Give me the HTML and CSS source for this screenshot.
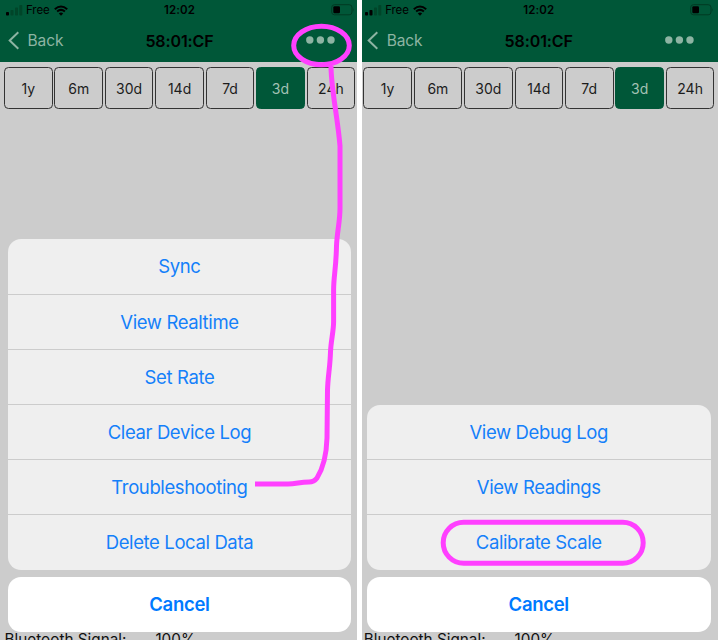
FILE: index.html
```html
<!DOCTYPE html>
<html lang="en">
<head>
<meta charset="utf-8">
<title>Device actions</title>
<link rel="stylesheet" href="styles.css">
</head>
<body>
<svg width="0" height="0" class="defs">
  <symbol id="signal" viewBox="0 0 17 11"><rect x="0" y="7" width="3" height="3.5" rx=".8"/><rect x="4.5" y="5" width="3" height="5.5" rx=".8" class="mid"/><rect x="9" y="2.5" width="3" height="8" rx=".8" class="dim"/><rect x="13.3" y="0" width="3" height="10.5" rx=".8" class="dim"/></symbol>
  <symbol id="wifi" viewBox="0 0 14 11"><path d="M.8 4.2Q7-1.3 13.200 4.2M3.1 6.6Q7 3.2 10.900 6.6" fill="none" stroke="#000" stroke-width="2"/><path d="M4.8 8.5Q7 6.7 9.2 8.5L7 10.8Z"/></symbol>
  <symbol id="battery" viewBox="0 0 24 12"><rect x=".7" y=".7" width="20.3" height="10.1" rx="2.8" fill="none" stroke="#003a23" stroke-width="1"/><rect x="2.3" y="2.3" width="6.7" height="7" rx="1.2"/><path d="M22 4Q23.4 5.7 22 7.6Z" fill="#003a23"/></symbol>
  <symbol id="back" viewBox="0 0 12 19"><path d="M10.3 1.2L1.7 9.5L10.3 17.8" fill="none" stroke="#8db4a3" stroke-width="2"/></symbol>
  <symbol id="more" viewBox="0 0 29 8"><circle cx="3.8" cy="4" r="3.7"/><circle cx="14.4" cy="4" r="3.7"/><circle cx="25" cy="4" r="3.7"/></symbol>
</svg>
<main class="screens">
  <section class="phone first">
    <header class="top">
      <div class="status"><span class="carrier"><svg class="signal one"><use href="#signal"/></svg><span class="net">Free</span><svg class="wifi"><use href="#wifi"/></svg></span><span class="time">12:02</span><svg class="battery"><use href="#battery"/></svg></div>
      <div class="nav"><span class="back"><svg class="chevron"><use href="#back"/></svg>Back</span><span class="title">58:01:CF</span><svg class="more"><use href="#more"/></svg></div>
    </header>
    <div class="tabs"><span>1y</span><span>6m</span><span>30d</span><span>14d</span><span>7d</span><span class="on">3d</span><span>24h</span></div>
    <div class="sheets">
      <div class="sheet"><div class="row">Sync</div><div class="row">View Realtime</div><div class="row">Set Rate</div><div class="row">Clear Device Log</div><div class="row">Troubleshooting</div><div class="row">Delete Local Data</div></div>
      <div class="cancel">Cancel</div>
    </div>
    <div class="info"><span>Bluetooth Signal:</span><span>100%</span></div>
  </section>
  <section class="phone second">
    <header class="top">
      <div class="status"><span class="carrier"><svg class="signal two"><use href="#signal"/></svg><span class="net">Free</span><svg class="wifi"><use href="#wifi"/></svg></span><span class="time">12:02</span><svg class="battery"><use href="#battery"/></svg></div>
      <div class="nav"><span class="back"><svg class="chevron"><use href="#back"/></svg>Back</span><span class="title">58:01:CF</span><svg class="more"><use href="#more"/></svg></div>
    </header>
    <div class="tabs"><span>1y</span><span>6m</span><span>30d</span><span>14d</span><span>7d</span><span class="on">3d</span><span>24h</span></div>
    <div class="sheets">
      <div class="sheet"><div class="row">View Debug Log</div><div class="row">View Readings</div><div class="row">Calibrate Scale</div></div>
      <div class="cancel">Cancel</div>
    </div>
    <div class="info"><span>Bluetooth Signal:</span><span>100%</span></div>
  </section>
  <svg class="marks" viewBox="0 0 718 640">
    <ellipse cx="321.5" cy="45.5" rx="27.8" ry="19.2"/>
    <path d="M331 66C331 88 338 120 340 146V208C340 222 337 232 336.500 246C336 270 333.700 275 333.600 290V322C333.500 332 331 340 330.500 352C330 368 328 375 327.500 390L327 438C326.500 455 322 470 317 478Q314 482 309 482C300 482 296 484 288 484H255"/>
    <rect x="443.200" y="522.200" width="200" height="41" rx="20.500"/>
  </svg>
</main>
</body>
</html>
```
FILE: styles.css
```css
* { box-sizing: border-box; }
body { margin: 0; background: #fff; font-family: Inter, "Liberation Sans", sans-serif; }
.defs { position: absolute; }
.screens { position: relative; display: flex; justify-content: space-between; width: 718px; height: 640px; overflow: hidden; }
.phone { display: flex; flex-direction: column; height: 640px; overflow: hidden; background: #ccc; }
.first { width: 356.5px; }
.second { width: 356.3px; }
.top { flex: none; height: 61.7px; background: #005738; }
.first .top { padding-left: 2.5px; }
.status, .nav { display: grid; grid-template-columns: 1fr auto 1fr; align-items: center; width: 354px; }
.status { height: 20px; }
.carrier { display: flex; align-items: center; padding-left: 3px; }
.signal { width: 17px; height: 11px; }
.dim { fill: #004529; }
.one { --mid: #004529; }
.two { --mid: #000; }
.mid { fill: var(--mid); }
.net { width: 24px; margin: 0 4px 0 3.5px; font-size: 11.5px; letter-spacing: -.1px; white-space: nowrap; }
.wifi { width: 14px; height: 11px; }
.time { font-size: 11.5px; font-weight: 600; letter-spacing: .1px; }
.battery { justify-self: end; width: 24px; height: 12px; margin-right: 2px; }
.nav { height: 41px; }
.back { display: flex; align-items: center; gap: 7.5px; padding-left: 5.5px; font-size: 15.5px; letter-spacing: -.1px; color: #8db4a3; }
.chevron { width: 12px; height: 19px; }
.title { font-size: 16px; font-weight: 600; letter-spacing: -.1px; }
.more { justify-self: end; width: 29px; height: 8px; margin: 0 21.8px 1.5px 0; fill: #8db4a3; }
.tabs { flex: none; display: flex; gap: 1.9px; width: 351.2px; height: 42.3px; margin: 5.5px 0 0 1.5px; }
.first .tabs { margin-left: 4px; }
.tabs span { flex: 1; display: flex; align-items: center; justify-content: center; border: 1.2px solid #333; border-radius: 4.5px; font-size: 14px; letter-spacing: 0; color: #1c1c1c; }
.tabs .on { border-color: #005738; background: #005738; color: #a3c2b4; }
.sheets { flex: none; display: flex; flex-direction: column; gap: 7.5px; width: 343.5px; margin: auto 0 0 5.3px; }
.first .sheets { margin-left: 7.7px; }
.sheet, .cancel { border-radius: 13px; overflow: hidden; text-align: center; font-size: 18.5px; line-height: 55px; color: #1480fa; }
.sheet { background: #efefef; }
.row { height: 55.1px; letter-spacing: -.38px; }
.row:first-child { height: 54.6px; }
.row + .row { border-top: 1px solid #ccc; }
.cancel { height: 55px; background: #fff; font-weight: 600; letter-spacing: -.3px; color: #007aff; }
.info { flex: none; display: flex; gap: 29px; height: 8px; padding-left: 2px; font-size: 15.3px; line-height: 16px; white-space: nowrap; color: #111; }
.first .info { padding-left: 4.5px; }
.marks { position: absolute; inset: 0; width: 718px; height: 640px; fill: none; stroke: #ff40ff; stroke-width: 5; stroke-linejoin: round; }
```
